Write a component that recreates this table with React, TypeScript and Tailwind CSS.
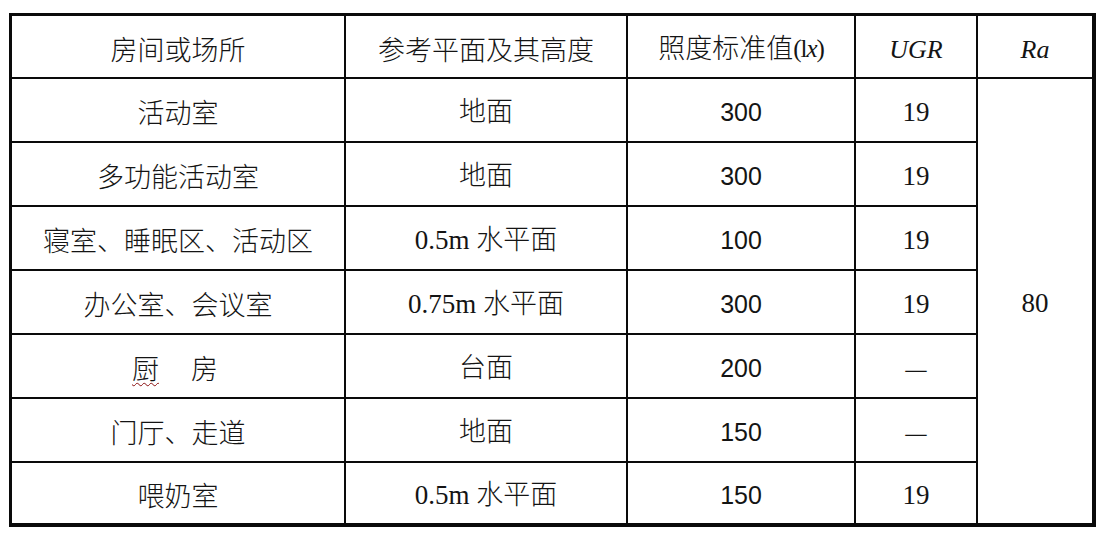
import React from "react";

const cjk = "font-['Noto_Sans_CJK_SC',sans-serif] font-light";
const mixed = "font-['Liberation_Serif','Noto_Sans_CJK_SC',serif] font-light";
const num = "font-['Liberation_Sans',sans-serif]";

const rows = [
  { place: "活动室", plane: "地面", lux: "300", ugr: "19" },
  { place: "多功能活动室", plane: "地面", lux: "300", ugr: "19" },
  { place: "寝室、睡眠区、活动区", plane: "0.5m 水平面", lux: "100", ugr: "19" },
  { place: "办公室、会议室", plane: "0.75m 水平面", lux: "300", ugr: "19" },
  { place: "厨房", plane: "台面", lux: "200", ugr: "—" },
  { place: "门厅、走道", plane: "地面", lux: "150", ugr: "—" },
  { place: "喂奶室", plane: "0.5m 水平面", lux: "150", ugr: "19" },
];

function Cell({ children, className = "" }: { children: React.ReactNode; className?: string }) {
  return (
    <div className={`flex items-center justify-center bg-white pt-[5px] text-[#141414] ${className}`}>
      {children}
    </div>
  );
}

export default function App() {
  return (
    <div className="w-[1106px] h-[536px] bg-white pl-[9px] pt-[13px]">
      <div className="inline-grid grid-cols-[332px_280px_226px_120px_114px] grid-rows-[61px_repeat(6,62px)_60px] gap-[2px] bg-[#0a0a0a] p-[3px] pr-[4px] pb-[4px]">
        <Cell className={`${cjk} text-[27px]`}>房间或场所</Cell>
        <Cell className={`${cjk} text-[27px]`}>参考平面及其高度</Cell>
        <Cell className={`${mixed} text-[27px]`}>
          照度标准值<span className="text-[25px] tracking-[-1px]">(l<i>x</i>)</span>
        </Cell>
        <Cell className={`${mixed} text-[26px] italic`}>UGR</Cell>
        <Cell className={`${mixed} text-[26px] italic`}>Ra</Cell>

        {rows.map((r, i) => (
          <React.Fragment key={i}>
            <Cell className={`${cjk} text-[27px]`}>
              {r.place === "厨房" ? (
                <span className="flex gap-[32px] pr-[6px]">
                  <span className="underline decoration-wavy decoration-[#8a1010] decoration-1 underline-offset-[3px]">厨</span>
                  <span>房</span>
                </span>
              ) : (
                r.place
              )}
            </Cell>
            <Cell className={`${mixed} text-[27px]`}>{r.plane}</Cell>
            <Cell className={`${num} text-[25px] text-[#222] pt-[6px]`}>{r.lux}</Cell>
            <Cell className={r.ugr === "—" ? `${cjk} text-[27px]` : `${mixed} text-[27px]`}>{r.ugr}</Cell>
            {i === 0 && (
              <Cell className={`${mixed} text-[27px] col-start-5 row-start-2 row-span-7`}>80</Cell>
            )}
          </React.Fragment>
        ))}
      </div>
    </div>
  );
}
